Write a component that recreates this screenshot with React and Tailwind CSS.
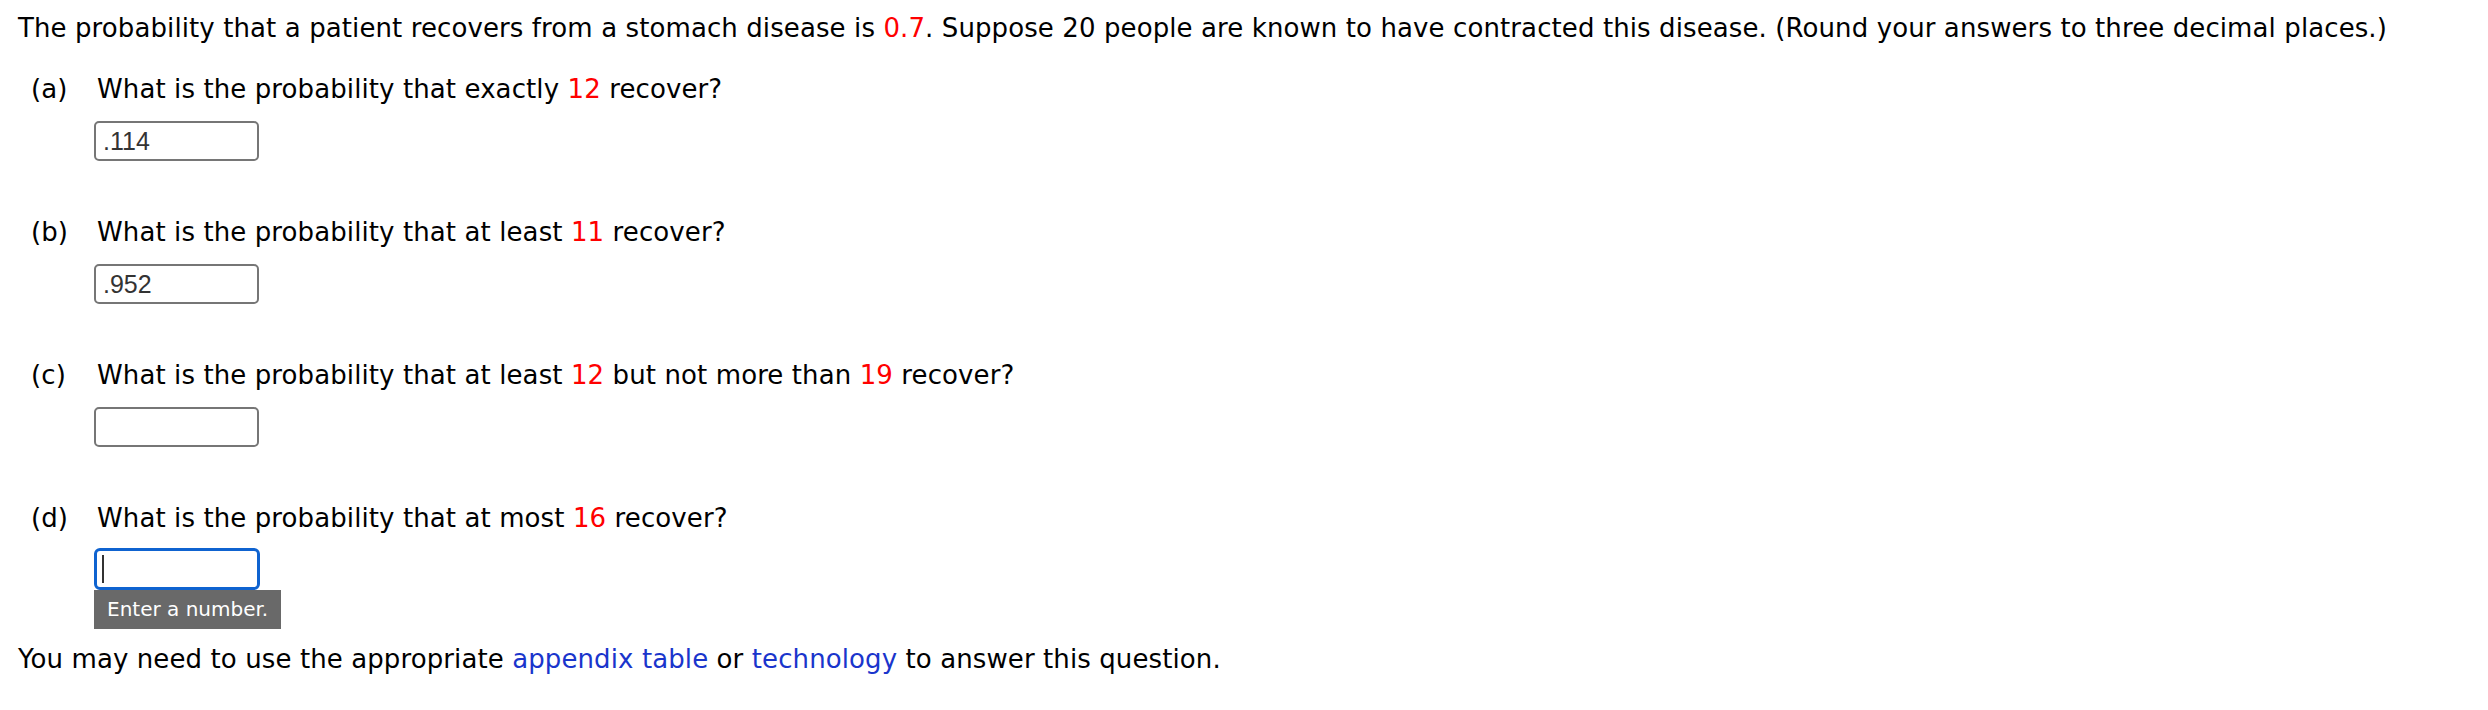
import React from 'react';

const questions = [
  { key: 'a', parts: ['What is the probability that exactly ', '12', ' recover?'], value: '.114' },
  { key: 'b', parts: ['What is the probability that at least ', '11', ' recover?'], value: '.952' },
  { key: 'c', parts: ['What is the probability that at least ', '12', ' but not more than ', '19', ' recover?'], value: '' },
  { key: 'd', parts: ['What is the probability that at most ', '16', ' recover?'], value: '', focused: true },
];

const Red = ({ children }) => <span className="text-[#ff0000]">{children}</span>;

const Question = ({ q, first }) => (
  <div className={first ? 'mt-[29px]' : 'mt-[55px]'}>
    <div className="flex pl-[31px]">
      <span className="w-[63px] shrink-0">({q.key})</span>
      <span className="pl-[3px]">
        {q.parts.map((p, i) => (i % 2 === 1 ? <Red key={i}>{p}</Red> : <span key={i}>{p}</span>))}
      </span>
    </div>
    <div className="pl-[94px]">
      {q.focused ? (
        <>
          <div className="mt-[14px] flex h-[42px] w-[166px] items-center rounded-[6px] border-[3px] border-[#0f63d0] bg-white pl-[5px]">
            <span className="block h-[28px] w-[2px] bg-[#333]" />
          </div>
          <div className="inline-block h-[39px] bg-[#696969] px-[13px] text-[20px] leading-[39px] tracking-normal text-white">
            Enter a number.
          </div>
        </>
      ) : (
        <input
          readOnly
          value={q.value}
          className="mt-[16px] block h-[40px] w-[165px] rounded-[5px] border-2 border-[#767676] bg-white px-[7px] text-[25px] tracking-normal text-[#333] outline-none"
          style={{ fontFamily: '"Liberation Sans", Arial, sans-serif' }}
        />
      )}
    </div>
  </div>
);

export default function App() {
  return (
    <div
      className="min-h-[710px] bg-white pt-[12px] text-[26px] leading-[32px] tracking-[0.1px] text-black"
      style={{ fontFamily: '"DejaVu Sans", Verdana, sans-serif' }}
    >
      <p className="pl-[18px]">
        The probability that a patient recovers from a stomach disease is <Red>0.7</Red>. Suppose 20 people are known to
        have contracted this disease. (Round your answers to three decimal places.)
      </p>
      {questions.map((q, i) => (
        <Question key={q.key} q={q} first={i === 0} />
      ))}
      <p className="mt-[14px] pl-[18px]">
        You may need to use the appropriate <a className="text-[#1a35cc]">appendix table</a> or{' '}
        <a className="text-[#1a35cc]">technology</a> to answer this question.
      </p>
    </div>
  );
}
